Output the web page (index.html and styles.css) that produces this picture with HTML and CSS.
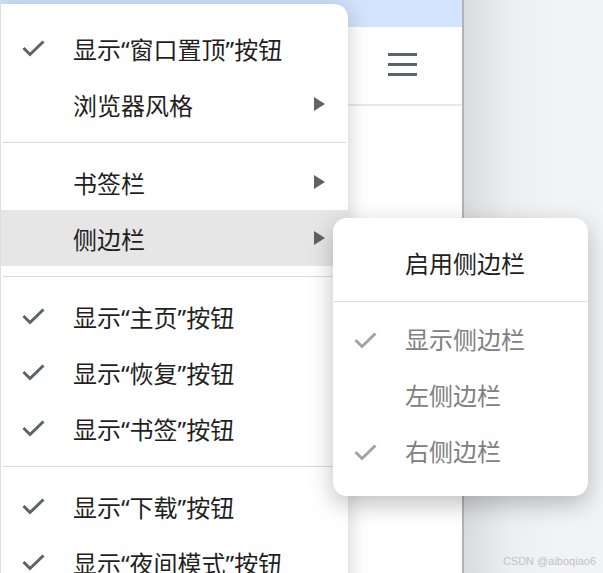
FILE: index.html
```html
<!DOCTYPE html>
<html lang="zh-CN">
<head>
    <meta charset="UTF-8">
    <title>浏览器菜单</title>
    <link rel="stylesheet" href="styles.css">
</head>
<body>
    <div class="browser">
        <div class="window">
            <div class="tabstrip"></div>
            <div class="toolbar">
                <div class="hamburger">
                    <span></span><span></span><span></span>
                </div>
            </div>
        </div>
        <div class="divider"></div>
        <div class="pane"></div>
    </div>

    <!-- main menu -->
    <div class="menu">
        <div class="item"><span class="check"><svg viewBox="0 0 23 17"><polyline points="1.5,8 8,14.5 21.5,1.5"/></svg></span><span class="label">显示“窗口置顶”按钮</span></div>
        <div class="item"><span class="check"></span><span class="label">浏览器风格</span><span class="arrow"></span></div>
        <div class="sep"></div>
        <div class="item"><span class="check"></span><span class="label">书签栏</span><span class="arrow"></span></div>
        <div class="item active"><span class="check"></span><span class="label">侧边栏</span><span class="arrow"></span></div>
        <div class="sep"></div>
        <div class="item"><span class="check"><svg viewBox="0 0 23 17"><polyline points="1.5,8 8,14.5 21.5,1.5"/></svg></span><span class="label">显示“主页”按钮</span></div>
        <div class="item"><span class="check"><svg viewBox="0 0 23 17"><polyline points="1.5,8 8,14.5 21.5,1.5"/></svg></span><span class="label">显示“恢复”按钮</span></div>
        <div class="item"><span class="check"><svg viewBox="0 0 23 17"><polyline points="1.5,8 8,14.5 21.5,1.5"/></svg></span><span class="label">显示“书签”按钮</span></div>
        <div class="sep"></div>
        <div class="item"><span class="check"><svg viewBox="0 0 23 17"><polyline points="1.5,8 8,14.5 21.5,1.5"/></svg></span><span class="label">显示“下载”按钮</span></div>
        <div class="item"><span class="check"><svg viewBox="0 0 23 17"><polyline points="1.5,8 8,14.5 21.5,1.5"/></svg></span><span class="label">显示“夜间模式”按钮</span></div>
    </div>

    <!-- sidebar submenu -->
    <div class="submenu">
        <div class="item"><span class="check"></span><span class="label">启用侧边栏</span></div>
        <div class="sep"></div>
        <div class="item disabled"><span class="check"><svg viewBox="0 0 23 17"><polyline points="1.5,8 8,14.5 21.5,1.5"/></svg></span><span class="label">显示侧边栏</span></div>
        <div class="item disabled"><span class="check"></span><span class="label">左侧边栏</span></div>
        <div class="item disabled"><span class="check"><svg viewBox="0 0 23 17"><polyline points="1.5,8 8,14.5 21.5,1.5"/></svg></span><span class="label">右侧边栏</span></div>
    </div>

    <div class="watermark">CSDN @aiboqiao6</div>
</body>
</html>
```

FILE: styles.css
```css
body {
    margin: 0;
    width: 603px;
    height: 573px;
    overflow: hidden;
    position: relative;
    font-family: "Noto Sans", "Noto Sans CJK SC", sans-serif;
    color: #1f1f1f;
}
.browser {
    display: flex;
    height: 573px;
}
.window {
    width: 462px;
    background: #fff;
}
.tabstrip {
    height: 27px;
    background: #d3e3fd;
}
.toolbar {
    height: 77px;
    border-bottom: 2px solid #e8e8e8;
    display: flex;
    justify-content: flex-end;
    padding-right: 45px;
}
.hamburger {
    width: 29px;
    padding-top: 26px;
}
.hamburger span {
    display: block;
    height: 3px;
    background: #5f6368;
    margin-bottom: 7px;
}
.divider {
    width: 2px;
    background: #b3b3b3;
}
.pane {
    flex: 1;
    background: linear-gradient(to right, #d9dadc, #eceef0 45px, #f2f3f5 90px);
}

.menu {
    position: absolute;
    left: 0;
    top: 4px;
    width: 347px;
    height: 600px;
    padding-top: 16px;
    background: #fff;
    border-left: 1px solid #dedede;
    border-radius: 0 14px 0 0;
    box-shadow: 0 2px 22px rgba(0,0,0,0.2);
}
.submenu {
    position: absolute;
    left: 333px;
    top: 218px;
    width: 255px;
    height: 260px;
    padding-top: 18px;
    background: #fff;
    border-radius: 14px;
    box-shadow: 0 8px 24px rgba(0,0,0,0.25);
}
.item {
    height: 56px;
    display: flex;
    align-items: center;
    font-size: 24px;
}
.item.active {
    background: #e6e6e6;
}
.check {
    width: 23px;
    height: 17px;
    margin-left: 21px;
    margin-right: 28px;
}
.check svg {
    display: block;
    width: 23px;
    height: 17px;
    fill: none;
    stroke: #5f6368;
    stroke-width: 3;
}
.label {
    flex: 1;
    line-height: 1;
}
.menu .label {
    padding-top: 4px;
}
.arrow {
    width: 0;
    height: 0;
    border-top: 7.5px solid transparent;
    border-bottom: 7.5px solid transparent;
    border-left: 11px solid #5f6368;
    margin-right: 23px;
}
.sep {
    height: 1px;
    margin: 10px 2px 11px;
    background: #dadada;
}
.submenu .sep {
    margin: 9px 1px 10px;
}
.item.disabled {
    color: #808080;
}
.item.disabled .check svg {
    stroke: #a3a3a3;
}
.watermark {
    position: absolute;
    right: 7px;
    bottom: 6px;
    font-family: "Liberation Sans", sans-serif;
    font-size: 11px;
    color: #c2c2c2;
}
```
